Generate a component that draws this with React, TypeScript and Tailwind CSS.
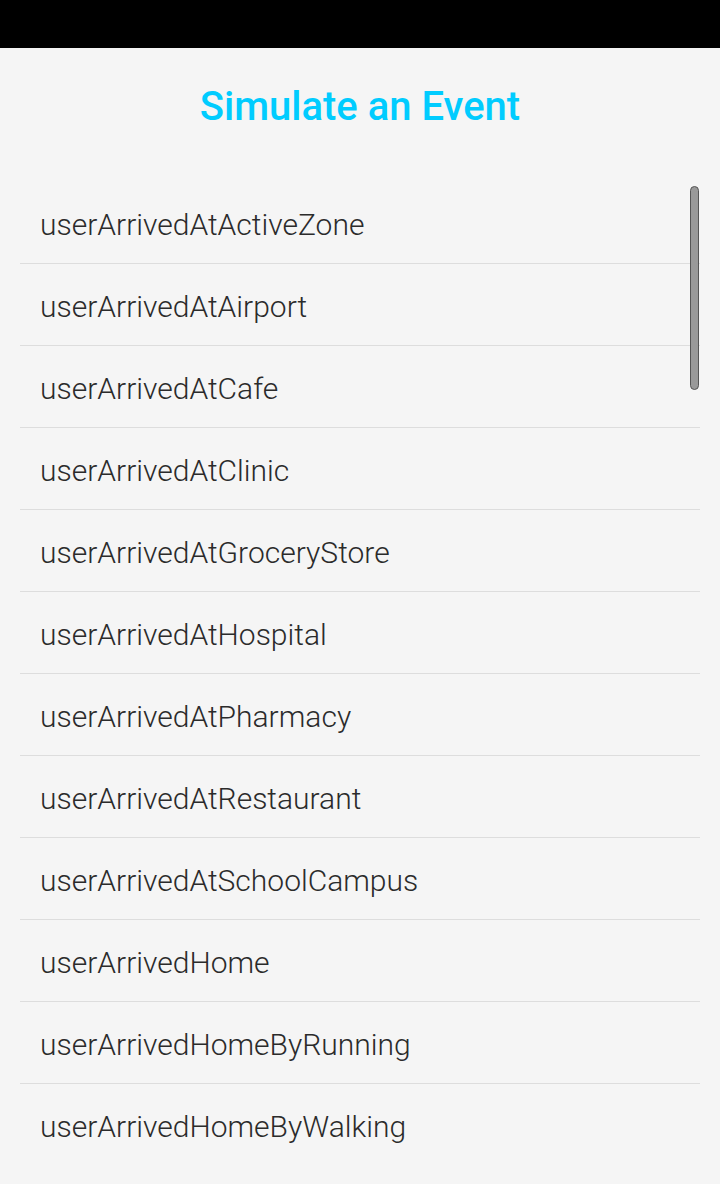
import React from "react";

const events = [
  "userArrivedAtActiveZone",
  "userArrivedAtAirport",
  "userArrivedAtCafe",
  "userArrivedAtClinic",
  "userArrivedAtGroceryStore",
  "userArrivedAtHospital",
  "userArrivedAtPharmacy",
  "userArrivedAtRestaurant",
  "userArrivedAtSchoolCampus",
  "userArrivedHome",
  "userArrivedHomeByRunning",
  "userArrivedHomeByWalking",
];

export default function App() {
  return (
    <div className="h-[1184px] w-[720px] overflow-hidden bg-[#f5f5f5] font-['Roboto',sans-serif]">
      <div className="h-12 bg-black" />
      <h1 className="pt-[32px] text-center text-[40px] font-medium leading-[54px] text-[#00ccff]">
        Simulate an Event
      </h1>
      <div className="relative mt-[48px] px-5">
        <ul>
          {events.map((name, i) => (
            <li
              key={name}
              className={
                "flex h-[82px] items-center pl-5 pt-[3px] text-[30px] font-light text-[#2b2b2b] " +
                (i < events.length - 1 ? "border-b border-[#dddddd]" : "")
              }
            >
              {name}
            </li>
          ))}
        </ul>
        <div className="absolute right-[21px] top-[4px] h-[204px] w-[9px] rounded-full border border-[#555555] bg-[#999999]" />
      </div>
    </div>
  );
}
